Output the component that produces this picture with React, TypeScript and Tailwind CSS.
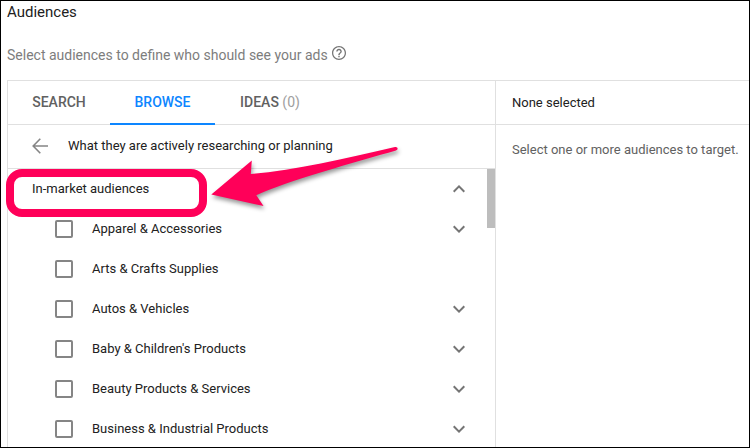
import { useState } from 'react'

interface Audience {
  id: string
  label: string
  expandable: boolean
}

const TABS = [
  { id: 'search', label: 'SEARCH', width: 'w-[102px]' },
  { id: 'browse', label: 'BROWSE', width: 'w-[105px]' },
  { id: 'ideas',  label: 'IDEAS', count: 0, width: 'w-[110px]' },
]

const AUDIENCES: Audience[] = [
  { id: 'apparel',  label: 'Apparel & Accessories',          expandable: true },
  { id: 'arts',     label: 'Arts & Crafts Supplies',         expandable: false },
  { id: 'autos',    label: 'Autos & Vehicles',               expandable: true },
  { id: 'baby',     label: "Baby & Children's Products",     expandable: true },
  { id: 'beauty',   label: 'Beauty Products & Services',     expandable: true },
  { id: 'business', label: 'Business & Industrial Products', expandable: true },
]

function Chevron({ up = false }: { up?: boolean }) {
  return (
    <svg viewBox="0 0 12 8" className="h-2 w-3" fill="none" stroke="#757575" strokeWidth="2">
      <path d={up ? 'M.7 6.7 6 1.4l5.3 5.3' : 'M.7 1.3 6 6.6l5.3-5.3'} />
    </svg>
  )
}

function BackArrow() {
  return (
    <svg viewBox="0 0 16 16" className="size-4" fill="none" stroke="#858585" strokeWidth="1.6">
      <path d="M16 8H1.5M8.3 .8 1.2 8l7.1 7.2" />
    </svg>
  )
}

function HelpIcon() {
  return (
    <svg viewBox="2 2 20 20" className="size-3.5" fill="#757575">
      <path d="M11 18h2v-2h-2v2zm1-16C6.48 2 2 6.48 2 12s4.48 10 10 10 10-4.48 10-10S17.52 2 12 2zm0 18.2c-4.52 0-8.2-3.68-8.2-8.2S7.48 3.8 12 3.8s8.2 3.68 8.2 8.2-3.68 8.2-8.2 8.2zm0-14.2c-2.21 0-4 1.79-4 4h2c0-1.1.9-2 2-2s2 .9 2 2c0 2-3 1.75-3 5h2c0-2.25 3-2.5 3-5 0-2.21-1.79-4-4-4z" />
    </svg>
  )
}

function AudienceRow({ id, label, expandable }: Audience) {
  return (
    <li className="flex h-10 shrink-0 items-center pr-[30px] pl-[47px]">
      <input
        id={id}
        type="checkbox"
        className="size-[18px] shrink-0 appearance-none rounded-xs border-2 border-[#858585] bg-white checked:bg-[#0d86ff]"
      />
      <label htmlFor={id} className="flex-1 pl-[19px]">{label}</label>
      {expandable && (
        <button type="button" aria-label={`Expand ${label}`}>
          <Chevron />
        </button>
      )}
    </li>
  )
}

export default function App() {
  const [tab, setTab] = useState('browse')

  return (
    <main className="flex h-screen flex-col overflow-hidden border border-black bg-white pl-1.5 font-['Roboto',sans-serif] text-[13px] leading-5 text-[#212121]">
      <h1 className="pt-px text-[15px] leading-5">Audiences</h1>
      <div className="flex items-center gap-1 pt-[23px] pb-[15px]">
        <p className="text-[14px] text-[#7d7d7d]">Select audiences to define who should see your ads</p>
        <button type="button" aria-label="Help" className="pb-1">
          <HelpIcon />
        </button>
      </div>

      <div className="grid min-h-0 flex-1 grid-cols-[489fr_253fr] border-t border-[#e0e0e0]">
        {/* Picker */}
        <section className="flex min-h-0 flex-col border-x border-[#e0e0e0]">
          <div role="tablist" className="flex h-11 shrink-0 border-b border-[#e0e0e0]">
            {TABS.map(({ id, label, count, width }) => (
              <button
                key={id}
                type="button"
                role="tab"
                aria-selected={tab === id}
                onClick={() => setTab(id)}
                className={`-mb-px border-b-2 text-[14px] font-medium ${width} ${
                  tab === id ? 'border-[#0d86ff] text-[#0d86ff]' : 'border-transparent text-[#616161]'
                }`}
              >
                {label}
                {count !== undefined && <span className="font-normal text-[#9e9e9e]"> ({count})</span>}
              </button>
            ))}
          </div>

          <div className="flex h-11 shrink-0 items-center gap-5 border-b border-[#e0e0e0] pb-0.5 pl-6">
            <button type="button" aria-label="Back">
              <BackArrow />
            </button>
            <h2>What they are actively researching or planning</h2>
          </div>

          <div className="relative flex min-h-0 flex-1 flex-col overflow-hidden">
            <div className="flex h-10 shrink-0 items-center justify-between pr-[30px] pl-6">
              <h3>In-market audiences</h3>
              <button type="button" aria-label="Collapse In-market audiences">
                <Chevron up />
              </button>
            </div>
            <ul>
              {AUDIENCES.map((audience) => (
                <AudienceRow key={audience.id} {...audience} />
              ))}
            </ul>
            <div className="absolute top-0 right-0 h-[59px] w-2 bg-[#bdbdbd]" />
          </div>
        </section>

        {/* Selection */}
        <section>
          <h2 className="flex h-11 items-center border-b border-[#e0e0e0] pl-4">None selected</h2>
          <p className="pt-[15px] pl-4 text-[#616161]">Select one or more audiences to target.</p>
        </section>
      </div>

      {/* Callout drawn over the list */}
      <div className="pointer-events-none absolute top-[169px] left-1.5 h-12 w-[201px] rounded-2xl border-8 border-[#ff0059]" />
      <svg viewBox="0 0 200 72" className="pointer-events-none absolute top-36 left-[206px] h-[72px] w-[200px] drop-shadow-[1px_3px_2px_rgba(0,0,0,0.4)]">
        <path
          fill="#ff0059"
          d="M5.3 50.5 45.8 16.5 44.8 30C92 26 136 15 189 3c3-.5 3.500 2.600 1 3.600C150 18 104 31 72 42.500Q58 47.500 50.300 51.300L57.500 62z"
        />
      </svg>
    </main>
  )
}
